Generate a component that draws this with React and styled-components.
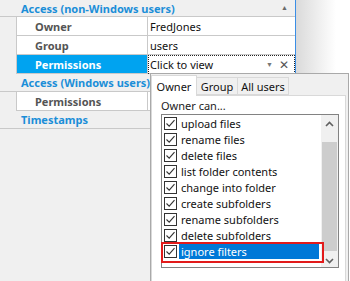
import React from "react";
import styled, { createGlobalStyle } from "styled-components";

const Global = createGlobalStyle`
  html, body { margin: 0; padding: 0; background: #fff; }
  body { font-family: "Noto Sans", "Liberation Sans", sans-serif; font-size: 11px; }
  * { box-sizing: border-box; }
`;

const Page = styled.div`
  position: relative;
  width: 350px;
  height: 281px;
  overflow: hidden;
  display: flex;
  background: #fff;
`;

const Grid = styled.div`
  width: 296px;
  height: 100%;
  background: #f0f0f0;
  border-right: 1px solid #3a8ee6;
  display: flex;
  flex-direction: column;
`;

const Shade = styled.div`
  width: 40px;
  height: 100%;
  background: linear-gradient(to right, #dadada, #fff);
`;

const Category = styled.div`
  height: ${(p) => p.$h || 18}px;
  flex: none;
  display: flex;
  align-items: center;
  padding: 0 7px 0 21px;
  background: #f0f0f0;
  border-bottom: 1px solid #c9c9c9;
  color: #1b8ed8;
  font-weight: bold;
  white-space: nowrap;
`;

const Collapse = styled.span`
  margin-left: auto;
  font-size: 7px;
  color: #6a6a6a;
  padding-bottom: 2px;
`;

const Row = styled.div`
  height: 19px;
  flex: none;
  display: grid;
  grid-template-columns: 17px 131px 1fr;
`;

const Strip = styled.div`
  background: #f0f0f0;
  border-right: 1px solid #c9c9c9;
`;

const Name = styled.div`
  display: flex;
  align-items: center;
  padding-left: 18px;
  font-weight: bold;
  color: ${(p) => (p.$sel ? "#fff" : "#545454")};
  background: ${(p) => (p.$sel ? "#00a3f0" : "#fff")};
  border-bottom: 1px solid #c9c9c9;
  border-right: 1px solid #c9c9c9;
  white-space: nowrap;
`;

const Value = styled.div`
  display: flex;
  align-items: center;
  padding-left: 2px;
  color: #111;
  background: #fff;
  border-bottom: 1px solid #c9c9c9;
  white-space: nowrap;
  ${(p) => p.$focus && `outline: 1px dotted #222; outline-offset: -1px;`}
`;

const ValueTools = styled.span`
  margin-left: auto;
  display: flex;
  align-items: center;
  gap: 6px;
  padding-right: 6px;
  color: #777;
`;

const DropGlyph = styled.span`
  font-size: 7px;
  color: #777;
`;

const ClearGlyph = styled.span`
  font-size: 12px;
  color: #555;
`;

const Popup = styled.div`
  position: absolute;
  left: 150px;
  top: 73px;
  width: 199px;
  height: 212px;
  background: #f0f0f0;
  border: 1px solid #a9a9a9;
  padding: 1px 2px 0 0;
  display: flex;
  flex-direction: column;
  font-size: 11px;
`;

const Tabs = styled.div`
  display: flex;
  align-items: flex-end;
  height: 20px;
  position: relative;
  z-index: 1;
`;

const Tab = styled.div`
  width: ${(p) => p.$w}px;
  height: ${(p) => (p.$active ? 21 : 18)}px;
  display: flex;
  align-items: center;
  justify-content: center;
  background: ${(p) => (p.$active ? "#fff" : "#f0f0f0")};
  border: 1px solid #d9d9d9;
  border-bottom: ${(p) => (p.$active ? "none" : "1px solid #d9d9d9")};
  margin-left: ${(p) => (p.$active ? 0 : -1)}px;
  color: #111;
  ${(p) => p.$active && `margin-bottom: -1px;`}
`;

const Panel = styled.div`
  flex: 1;
  background: #fff;
  border: 1px solid #d9d9d9;
  padding: 2px 6px 0 9px;
  display: flex;
  flex-direction: column;
`;

const Caption = styled.div`
  color: #222;
  height: 16px;
  line-height: 16px;
`;

const ListBox = styled.div`
  width: 178px;
  height: 154px;
  border: 1px solid #828282;
  display: flex;
  background: #fff;
  position: relative;
`;

const Items = styled.div`
  flex: 1;
  display: flex;
  flex-direction: column;
`;

const Item = styled.div`
  height: 16px;
  display: flex;
  align-items: center;
  padding-left: 2px;
`;

const Box = styled.span`
  width: 13px;
  height: 13px;
  border: 1px solid #333;
  background: #fff;
  display: inline-flex;
  align-items: center;
  justify-content: center;
  flex: none;
`;

const Label = styled.span`
  margin-left: 2px;
  padding: 0 2px;
  height: 15px;
  line-height: 15px;
  color: ${(p) => (p.$sel ? "#fff" : "#111")};
  background: ${(p) => (p.$sel ? "#0078d7" : "transparent")};
  flex: ${(p) => (p.$sel ? 1 : "none")};
  margin-right: ${(p) => (p.$sel ? 2 : 0)}px;
  white-space: nowrap;
`;

const Highlight = styled.div`
  position: absolute;
  left: -1px;
  top: 127px;
  width: 163px;
  height: 21px;
  border: 2px solid #e21b1b;
  pointer-events: none;
`;

const Scroll = styled.div`
  width: 17px;
  background: #f0f0f0;
  display: flex;
  flex-direction: column;
  align-items: stretch;
`;

const Arrow = styled.div`
  height: 17px;
  display: flex;
  align-items: center;
  justify-content: center;
  flex: none;
`;

const Track = styled.div`
  flex: 1;
  padding: 0 0 1px;
  display: flex;
  flex-direction: column;
`;

const Thumb = styled.div`
  margin: 10px 1px 0;
  height: 109px;
  background: #cdcdcd;
`;

const Check = () => (
  <svg width="11" height="11" viewBox="0 0 11 11">
    <path d="M1.5 5.5 L4.2 8.2 L9.5 2.2" fill="none" stroke="#333" strokeWidth="1.1" />
  </svg>
);

const Chevron = ({ down }) => (
  <svg width="9" height="6" viewBox="0 0 9 6">
    <path
      d={down ? "M1 1 L4.5 4.5 L8 1" : "M1 5 L4.5 1.5 L8 5"}
      fill="none"
      stroke="#606060"
      strokeWidth="1.6"
    />
  </svg>
);

const perms = [
  "upload files",
  "rename files",
  "delete files",
  "list folder contents",
  "change into folder",
  "create subfolders",
  "rename subfolders",
  "delete subfolders",
  "ignore filters",
];

export default function App() {
  return (
    <>
      <Global />
      <Page>
        <Grid>
          <Category $h={17}>
            Access (non-Windows users)
            <Collapse>▲</Collapse>
          </Category>
          <Row>
            <Strip />
            <Name>Owner</Name>
            <Value>FredJones</Value>
          </Row>
          <Row>
            <Strip />
            <Name>Group</Name>
            <Value>users</Value>
          </Row>
          <Row>
            <Strip />
            <Name $sel>Permissions</Name>
            <Value $focus>
              Click to view
              <ValueTools>
                <DropGlyph>▼</DropGlyph>
                <ClearGlyph>✕</ClearGlyph>
              </ValueTools>
            </Value>
          </Row>
          <Category>Access (Windows users)</Category>
          <Row>
            <Strip />
            <Name>Permissions</Name>
            <Value />
          </Row>
          <Category>Timestamps</Category>
        </Grid>
        <Shade />
        <Popup>
          <Tabs>
            <Tab $active $w={46}>Owner</Tab>
            <Tab $w={42}>Group</Tab>
            <Tab $w={52}>All users</Tab>
          </Tabs>
          <Panel>
            <Caption>Owner can...</Caption>
            <ListBox>
              <Items>
                {perms.map((p, i) => (
                  <Item key={p}>
                    <Box>
                      <Check />
                    </Box>
                    <Label $sel={i === perms.length - 1}>{p}</Label>
                  </Item>
                ))}
              </Items>
              <Scroll>
                <Arrow>
                  <Chevron />
                </Arrow>
                <Track>
                  <Thumb />
                </Track>
                <Arrow>
                  <Chevron down />
                </Arrow>
              </Scroll>
              <Highlight />
            </ListBox>
          </Panel>
        </Popup>
      </Page>
    </>
  );
}
